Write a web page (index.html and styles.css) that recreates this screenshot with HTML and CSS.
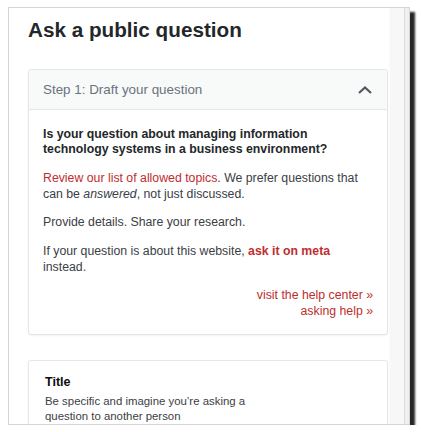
FILE: index.html
```html
<!DOCTYPE html>
<html lang="en">
<head>
<meta charset="utf-8">
<title>Ask a public question</title>
<link rel="stylesheet" href="styles.css">
</head>
<body>
<div class="frame">
  <main class="main">
    <h1 class="page-title">Ask a public question</h1>
    <section class="card">
      <header class="card-head">
        <span class="card-head-title">Step 1: Draft your question</span>
        <svg class="chevron" width="14" height="8" viewBox="0 0 14 8" aria-hidden="true"><path d="M1 7 L7 1.5 L13 7" fill="none" stroke="#4f565d" stroke-width="2.1"/></svg>
      </header>
      <div class="card-body">
        <p class="strong">Is your question about managing information technology systems in a business environment?</p>
        <p><a class="link" href="#">Review our list of allowed topics</a>. We prefer questions that can be <em>answered</em>, not just discussed.</p>
        <p>Provide details. Share your research.</p>
        <p>If your question is about this website, <a class="link bold" href="#">ask it on meta</a> instead.</p>
        <div class="help-links">
          <a class="link" href="#">visit the help center »</a>
          <a class="link" href="#">asking help »</a>
        </div>
      </div>
    </section>
    <section class="card field-card">
      <div class="field-label">Title</div>
      <div class="field-desc">Be specific and imagine you’re asking a question to another person</div>
    </section>
  </main>
  <div class="strip"></div>
</div>
</body>
</html>
```

FILE: styles.css
```css
html, body {
  margin: 0;
  padding: 0;
  background: #ffffff;
}

body {
  font-family: "Liberation Sans", Arial, sans-serif;
  color: #3b4045;
}

.frame {
  box-sizing: border-box;
  margin: 7px 0 0 8px;
  width: 402px;
  height: 418px;
  border: 1px solid #d4d4d4;
  box-shadow: 5px 5px 2px rgba(0, 0, 0, 0.85);
  display: flex;
  overflow: hidden;
  background: #ffffff;
}

.main {
  flex: 1;
  min-width: 0;
  padding: 8px 16px 0 19px;
  background: linear-gradient(to right, #ffffff 0, #ffffff 380px, #f7f7f7 381px);
}

.strip {
  width: 4px;
  border-left: 1px solid #dcdcdc;
  background: #efefef;
}

.page-title {
  margin: 0 0 26px 0;
  font-size: 20.7px;
  line-height: 27px;
  font-weight: bold;
  color: #242729;
}

.card {
  background: #ffffff;
  border: 1px solid #e4e6e8;
  border-radius: 3px;
  box-shadow: 0 1px 2px rgba(0, 0, 0, 0.05);
}

.card-head {
  height: 39px;
  display: flex;
  align-items: center;
  justify-content: space-between;
  padding: 0 15px 0 14px;
  background: #f8f9f9;
  border-bottom: 1px solid #e4e6e8;
  border-radius: 3px 3px 0 0;
}

.card-head-title {
  font-size: 13.4px;
  color: #6a737c;
}

.chevron {
  display: block;
}

.card-body {
  padding: 17px 14px 15px 14px;
  font-size: 12.3px;
  line-height: 15.4px;
}

.card-body p {
  margin: 0 0 13.4px 0;
}

.strong {
  font-weight: bold;
  color: #242729;
}

.link {
  color: #c02d2e;
  text-decoration: none;
}

.bold {
  font-weight: bold;
}

.help-links {
  display: flex;
  flex-direction: column;
  align-items: flex-end;
}

.field-card {
  margin-top: 25px;
  padding: 14px 16px 20px 16px;
}

.field-label {
  font-size: 12.5px;
  line-height: 15px;
  font-weight: bold;
  color: #0c0d0e;
  margin-bottom: 4px;
}

.field-desc {
  font-size: 11.4px;
  line-height: 15px;
  max-width: 212px;
  color: #3b4045;
}
```
